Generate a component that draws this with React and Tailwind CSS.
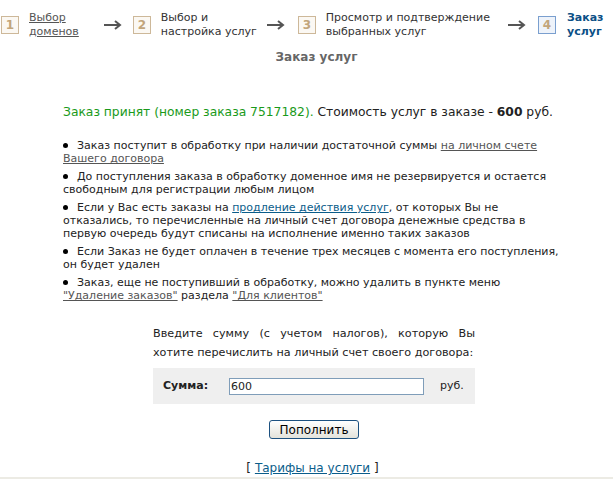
import React, { useState } from "react";

const Arrow = () => (
  <svg width="18" height="10" viewBox="0 0 18 10" className="shrink-0">
    <path d="M0 5 H16" stroke="#555" strokeWidth="2" />
    <path d="M11 1 L16 5 L11 9" stroke="#555" strokeWidth="2" fill="none" />
  </svg>
);

const StepBox = ({ n, active }) => (
  <div
    className={
      active
        ? "w-[18px] h-[18px] shrink-0 border border-[#7a9fcf] bg-[#eef3fa] flex items-center justify-center text-[12px] font-bold text-[#c2a57b]"
        : "w-[18px] h-[18px] shrink-0 border border-[#cdb899] bg-[#fbf8f3] flex items-center justify-center text-[12px] font-bold text-[#c2a57b]"
    }
  >
    {n}
  </div>
);

const Dot = () => (
  <span className="inline-block w-[5px] h-[5px] rounded-full bg-black align-middle mr-[9px] mb-[2px]" />
);

const App = () => {
  const [sum, setSum] = useState("600");

  return (
    <div
      className="w-[613px] h-[479px] bg-white text-[11px] text-[#222] overflow-hidden relative"
      style={{ fontFamily: "Verdana, 'DejaVu Sans', sans-serif" }}
    >
      {/* steps */}
      <div className="flex items-center pt-[10px] pl-[1px] whitespace-nowrap">
        <StepBox n={1} />
        <div className="ml-[10px] leading-[14px] text-[#555] underline mt-[1px]">
          Выбор
          <br />
          доменов
        </div>
        <div className="ml-[25px] mr-[11px]">
          <Arrow />
        </div>
        <StepBox n={2} />
        <div className="ml-[10px] leading-[14px] text-[#333] mt-[1px]">
          Выбор и
          <br />
          настройка услуг
        </div>
        <div className="ml-[10px] mr-[13px]">
          <Arrow />
        </div>
        <StepBox n={3} />
        <div className="ml-[10px] leading-[14px] text-[#333] mt-[1px]">
          Просмотр и подтверждение
          <br />
          выбранных услуг
        </div>
        <div className="ml-[18px] mr-[12px]">
          <Arrow />
        </div>
        <StepBox n={4} active />
        <div className="ml-[11px] leading-[14px] text-[#0b4f86] font-bold mt-[1px]">
          Заказ
          <br />
          услуг
        </div>
      </div>

      {/* title */}
      <div className="text-center font-bold text-[#666] text-[12px] mt-[9px] pl-[20px]">
        Заказ услуг
      </div>

      <div className="ml-[63px] w-[506px]">
        <p className="mt-[37px] text-[12.3px] whitespace-nowrap">
          <span className="text-[#1a9a1a]">Заказ принят (номер заказа 7517182).</span>{" "}
          Стоимость услуг в заказе - <b>600</b> руб.
        </p>

        <ul className="mt-[18px] leading-[13px] space-y-[5px]">
          <li>
            <Dot />
            Заказ поступит в обработку при наличии достаточной суммы{" "}
            <a href="#" className="text-[#555] underline">
              на личном счете Вашего договора
            </a>
          </li>
          <li>
            <Dot />
            До поступления заказа в обработку доменное имя не резервируется и остается свободным для регистрации любым лицом
          </li>
          <li>
            <Dot />
            Если у Вас есть заказы на{" "}
            <a href="#" className="text-[#0b5d8a] underline">
              продление действия услуг
            </a>
            , от которых Вы не отказались, то перечисленные на личный счет договора денежные средства в первую очередь будут списаны на исполнение именно таких заказов
          </li>
          <li>
            <Dot />
            Если Заказ не будет оплачен в течение трех месяцев с момента его поступления, он будет удален
          </li>
          <li>
            <Dot />
            Заказ, еще не поступивший в обработку, можно удалить в пункте меню{" "}
            <a href="#" className="text-[#555] underline whitespace-nowrap">
              "Удаление заказов"
            </a>{" "}
            раздела{" "}
            <a href="#" className="text-[#555] underline whitespace-nowrap">
              "Для клиентов"
            </a>
          </li>
        </ul>
      </div>

      {/* form */}
      <div className="w-[322px] ml-[153px] mt-[22px]">
        <div className="text-[11.2px] leading-[19px]">
          <div className="text-justify [text-align-last:justify]">
            Введите сумму (с учетом налогов), которую Вы
          </div>
          <div className="whitespace-nowrap">
            хотите перечислить на личный счет своего договора:
          </div>
        </div>
        <div className="mt-[6px] bg-[#efefef] h-[36px] flex items-center">
          <span className="ml-[10px] w-[66px] font-bold">Сумма:</span>
          <input
            value={sum}
            onChange={(e) => setSum(e.target.value)}
            className="w-[195px] h-[17px] border border-[#7f9db9] bg-white px-[1px] text-[11px] outline-none"
          />
          <span className="ml-[16px]">руб.</span>
        </div>
        <div className="flex justify-center mt-[16px]">
          <button className="w-[90px] h-[19px] rounded-[3px] border border-[#1c5180] bg-gradient-to-b from-white to-[#e3e3db] text-[12px] leading-none text-black">
            Пополнить
          </button>
        </div>
        <div className="text-center text-[12px] leading-[16px] mt-[21px] pr-[3px]">
          [{" "}
          <a href="#" className="text-[#0b5d8a] underline">
            Тарифы на услуги
          </a>{" "}
          ]
        </div>
      </div>

      <div className="absolute left-0 right-0 bottom-0 h-[2px] bg-[#ecebe4]" />
    </div>
  );
};

export default App;
